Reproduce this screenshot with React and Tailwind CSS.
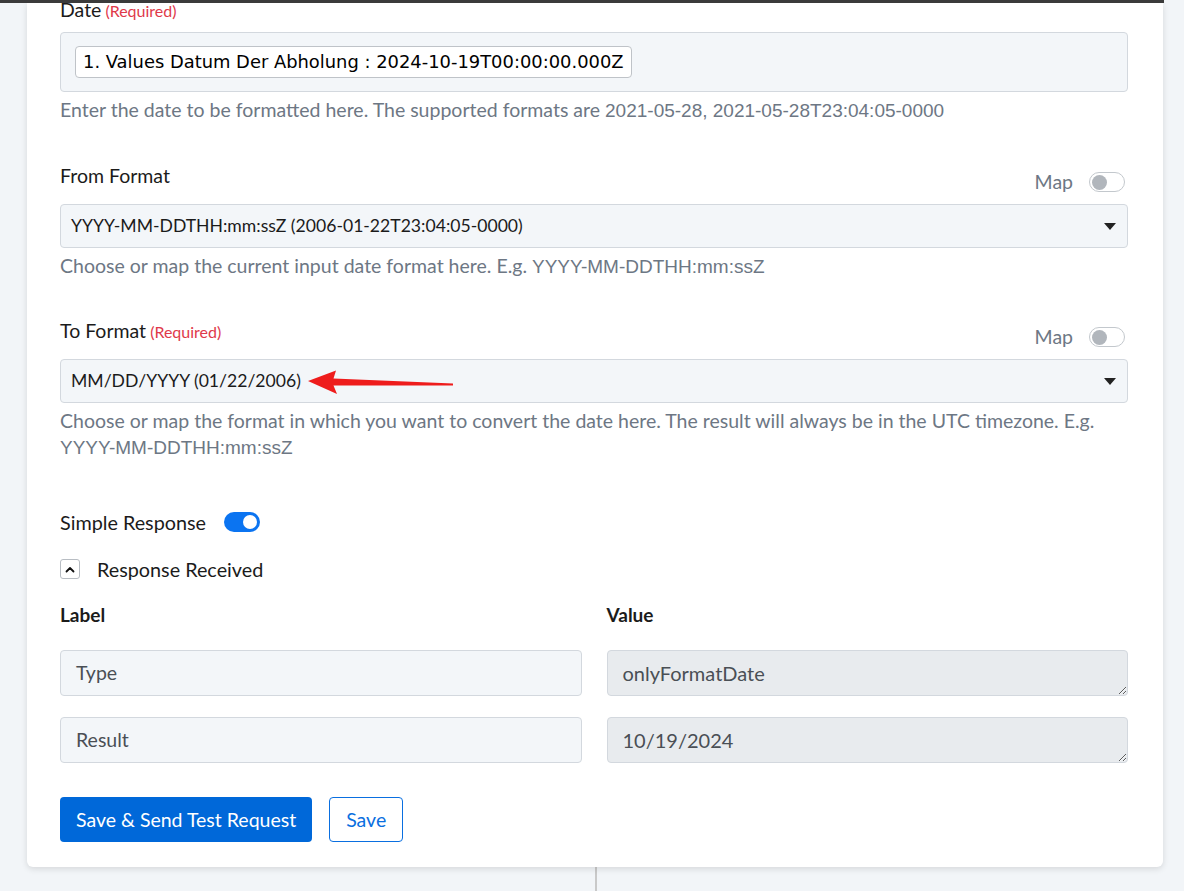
import React from "react";

const body = { fontFamily: "Lato, 'Noto Sans', sans-serif" };
const arial = { fontFamily: "'Liberation Sans', Arial, sans-serif", fontSize: "19px", lineHeight: "18px" };

function Caret() {
  return (
    <svg width="12" height="7" viewBox="0 0 12 7" className="shrink-0">
      <path d="M0 0 L12 0 L6 7 Z" fill="#222" />
    </svg>
  );
}

function Toggle({ on }) {
  if (on) {
    return (
      <span className="inline-flex h-[20px] w-[36px] items-center justify-end rounded-full bg-[#0b74f1] px-[3px]">
        <span className="h-[14px] w-[14px] rounded-full bg-white" />
      </span>
    );
  }
  return (
    <span className="inline-flex h-[20px] w-[36px] items-center rounded-full border border-[#c3c8cd] bg-white px-[2px]">
      <span className="h-[15px] w-[15px] rounded-full bg-[#b1b6bc]" />
    </span>
  );
}

function Label({ children, required }) {
  return (
    <div className="text-[19.5px] leading-[24px] text-[#1b1b1b]">
      {children}
      {required && <span className="ml-[4px] text-[16px] text-[#e0394a]">(Required)</span>}
    </div>
  );
}

function Help({ children }) {
  return <div className="text-[19.5px] leading-[26px] text-[#6d7784]">{children}</div>;
}

function FieldHead({ children, required }) {
  return (
    <div className="flex h-[40px] items-start justify-between">
      <Label required={required}>{children}</Label>
      <div className="flex items-center gap-[16px] pt-[6px] pr-[3px]">
        <span className="text-[19.5px] leading-[24px] text-[#6d7784]">Map</span>
        <Toggle />
      </div>
    </div>
  );
}

function Select({ children }) {
  return (
    <div className="flex h-[44px] items-center justify-between rounded-[4px] border border-[#d3d8de] bg-[#f3f6f9] pl-[10px] pr-[11px] text-[17.6px] text-[#1b1b1b]">
      <span>{children}</span>
      <Caret />
    </div>
  );
}

function ChevronUp() {
  return (
    <span className="flex h-[20px] w-[20px] items-center justify-center rounded-[3px] border border-[#b8bdc3] bg-white">
      <svg width="10" height="7" viewBox="0 0 10 7">
        <path d="M1.5 5.5 L5 2 L8.5 5.5" fill="none" stroke="#111" strokeWidth="1.8" strokeLinecap="round" strokeLinejoin="round" />
      </svg>
    </span>
  );
}

function KeyBox({ children }) {
  return (
    <div className="flex h-[46px] items-center rounded-[4px] border border-[#d3d8de] bg-[#f3f6f9] px-[15px] text-[19.5px] text-[#4a4f55]">
      {children}
    </div>
  );
}

function ValueBox({ value }) {
  return (
    <textarea
      readOnly
      value={value}
      rows={1}
      className="block h-[46px] w-full rounded-[4px] border border-[#d3d8de] bg-[#e8ebee] px-[15px] pt-[10px] text-[20px] leading-[24px] text-[#4a4f55] outline-none"
      style={body}
    />
  );
}

export default function App() {
  return (
    <div className="relative min-h-[891px] bg-[#f2f5f8]" style={body}>
      <div className="relative z-10 h-[3px] w-[1164px] bg-[#3b3b3b]" />
      <div className="flex">
        <div className="ml-[27px] w-[1136px] rounded-b-[6px] bg-white pl-[33px] pr-[35px] pb-[25px] shadow-[0_2px_6px_rgba(0,0,0,0.12)]">
          {/* Date */}
          <div className="-mt-[5px]">
            <Label required>Date</Label>
          </div>
          <div className="mt-[9px] flex h-[60px] items-center rounded-[4px] border border-[#d3d8de] bg-[#f3f6f9] px-[14px]">
            <span
              className="rounded-[4px] border border-[#bfc3c8] bg-white px-[7px] py-[3px] text-[17.9px] leading-[24px] text-black"
              style={{ fontFamily: "'DejaVu Sans', Verdana, sans-serif" }}
            >
              1. Values Datum Der Abholung : 2024-10-19T00:00:00.000Z
            </span>
          </div>
          <div className="mt-[5px]">
            <Help>
              Enter the date to be formatted here. The supported formats are{" "}
              <span style={arial}>2021-05-28, 2021-05-28T23:04:05-0000</span>
            </Help>
          </div>

          {/* From Format */}
          <div className="mt-[41px]">
            <FieldHead>From Format</FieldHead>
          </div>
          <Select>YYYY-MM-DDTHH:mm:ssZ (2006-01-22T23:04:05-0000)</Select>
          <div className="mt-[5px]">
            <Help>
              Choose or map the current input date format here. E.g.{" "}
              <span style={arial}>YYYY-MM-DDTHH:mm:ssZ</span>
            </Help>
          </div>

          {/* To Format */}
          <div className="mt-[40px]">
            <FieldHead required>To Format</FieldHead>
          </div>
          <div className="relative">
            <Select>MM/DD/YYYY (01/22/2006)</Select>
            <svg
              className="absolute left-[247px] top-[10px]"
              width="148"
              height="26"
              viewBox="0 0 148 26"
            >
              <path
                d="M1 12 L29 1.5 L26.5 9.5 L146 14.6 L146 16.6 L26.5 16.5 L30 25 Z"
                fill="#ee1c1c"
              />
            </svg>
          </div>
          <div className="mt-[5px]">
            <Help>
              Choose or map the format in which you want to convert the date here. The result will always be in the UTC timezone. E.g.
              <br />
              <span style={arial}>YYYY-MM-DDTHH:mm:ssZ</span>
            </Help>
          </div>

          {/* Simple response */}
          <div className="mt-[50px] flex h-[24px] items-center gap-[18px]">
            <span className="text-[19.8px] leading-[24px] text-[#1b1b1b]">Simple Response</span>
            <Toggle on />
          </div>
          <div className="mt-[23px] flex h-[24px] items-center gap-[17px]">
            <ChevronUp />
            <span className="text-[19.8px] leading-[24px] text-[#1b1b1b]">Response Received</span>
          </div>

          <div className="mt-[22px] grid grid-cols-2 gap-x-[25px]">
            <div className="text-[19px] font-bold leading-[24px] text-[#1b1b1b]">Label</div>
            <div className="text-[19px] font-bold leading-[24px] text-[#1b1b1b]">Value</div>
            <div className="mt-[23px]"><KeyBox>Type</KeyBox></div>
            <div className="mt-[23px]"><ValueBox value="onlyFormatDate" /></div>
            <div className="mt-[21px]"><KeyBox>Result</KeyBox></div>
            <div className="mt-[21px]"><ValueBox value="10/19/2024" /></div>
          </div>

          <div className="mt-[34px] flex gap-[17px]">
            <button className="h-[45px] rounded-[4px] bg-[#0068d9] px-[16px] text-[19.5px] text-white">
              Save &amp; Send Test Request
            </button>
            <button className="h-[45px] rounded-[4px] border border-[#0a6fe0] bg-white px-[16px] text-[19.5px] text-[#0a6fe0]">
              Save
            </button>
          </div>
        </div>
      </div>
      <div className="ml-[595px] h-[24px] w-[2px] bg-[#c9c9c9]" />
    </div>
  );
}
